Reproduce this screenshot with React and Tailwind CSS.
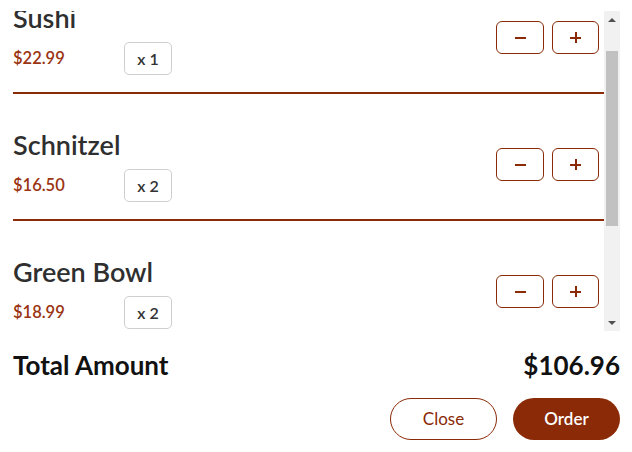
import React, { useEffect, useRef } from "react";

const items = [
  { name: "Sushi", price: "$22.99", qty: 1 },
  { name: "Schnitzel", price: "$16.50", qty: 2 },
  { name: "Green Bowl", price: "$18.99", qty: 2 },
];

const CartItem = ({ item }) => (
  <li className="flex items-center justify-between border-b-2 border-[#8a2a06] pt-[33px] pb-[17px] pr-[5px]">
    <div>
      <h3 className="text-[27px] leading-[36px] font-semibold text-[#2f2f2f] mb-[6px]">{item.name}</h3>
      <div className="flex items-center">
        <span className="w-[111px] text-[16.5px] font-semibold text-[#9a3412]">{item.price}</span>
        <span className="flex items-center justify-center w-[48px] h-[33px] border border-[#cfcfcf] rounded-[5px] text-[16px] font-semibold text-[#333]">
          x {item.qty}
        </span>
      </div>
    </div>
    <div className="flex gap-2">
      <button className="flex items-center justify-center w-[48px] h-[33px] border-[1.5px] border-[#8a2a06] rounded-[6px]">
        <span className="block w-[11px] h-[2px] bg-[#8a2a06]" />
      </button>
      <button className="relative flex items-center justify-center w-[47px] h-[33px] border-[1.5px] border-[#8a2a06] rounded-[6px]">
        <span className="block w-[11px] h-[2px] bg-[#8a2a06]" />
        <span className="absolute w-[2px] h-[11px] bg-[#8a2a06]" />
      </button>
    </div>
  </li>
);

// drawn scrollbar, the browser's own one is hidden in the screenshot
const Scrollbar = () => (
  <div className="flex flex-col w-[16px] h-full bg-[#f1f1f1]">
    <div className="flex items-center justify-center h-[15px] pt-[2px]">
      <svg width="8" height="4" viewBox="0 0 8 4"><path d="M0 4 L4 0 L8 4 Z" fill="#505050" /></svg>
    </div>
    <div className="flex-1 px-[2px] pt-[25px]">
      <div className="h-[175px] bg-[#c1c1c1]" />
    </div>
    <div className="flex items-center justify-center h-[15px] pb-[2px]">
      <svg width="8" height="4" viewBox="0 0 8 4"><path d="M0 0 L8 0 L4 4 Z" fill="#505050" /></svg>
    </div>
  </div>
);

export default function App() {
  const listRef = useRef(null);

  useEffect(() => {
    if (listRef.current) listRef.current.scrollTop = 44;
  }, []);

  return (
    <div className="w-[632px] h-[452px] bg-white pl-[13px] pr-[12px] pt-[11px] font-['Lato',sans-serif]">
      <div className="flex h-[320px]">
        <div ref={listRef} className="flex-1 overflow-hidden">
          <ul>
            {items.map((item) => (
              <CartItem key={item.name} item={item} />
            ))}
          </ul>
        </div>
        <Scrollbar />
      </div>
      <div className="flex items-center justify-between mt-[18px] h-[32px] text-[26px] font-bold text-[#111]">
        <span>Total Amount</span>
        <span>$106.96</span>
      </div>
      <div className="flex justify-end gap-4 mt-[17px]">
        <button className="w-[107px] h-[42px] rounded-full border border-[#8a2a06] text-[#8a2a06] text-[17px]">
          Close
        </button>
        <button className="w-[107px] h-[42px] rounded-full bg-[#8a2a06] text-white text-[17px] font-semibold">
          Order
        </button>
      </div>
    </div>
  );
}
